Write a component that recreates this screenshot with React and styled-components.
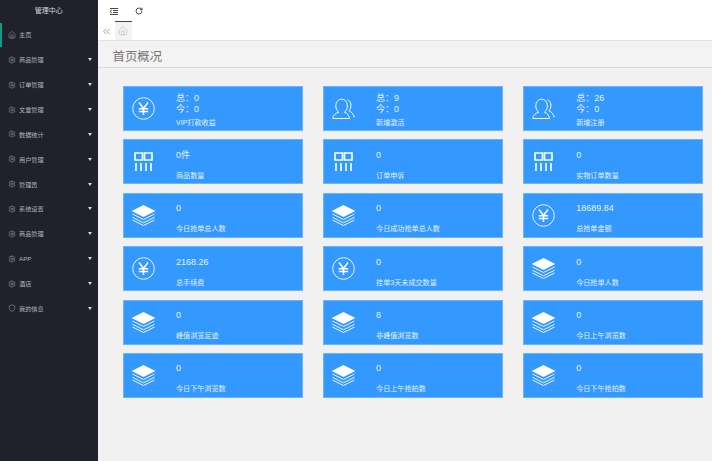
import React from "react";
import styled, { createGlobalStyle } from "styled-components";
import { Home, Settings, Shield, RotateCw, ChevronsLeft } from "lucide-react";

const GlobalStyle = createGlobalStyle`
  html, body {
    margin: 0;
    padding: 0;
    height: 100%;
    overflow: hidden;
    font-family: "Liberation Sans", "Noto Sans CJK SC", sans-serif;
    background: #f1f1f1;
  }
`;

const Page = styled.div`
  display: flex;
  width: 712px;
  height: 461px;
  overflow: hidden;
`;

const Sidebar = styled.aside`
  flex: 0 0 97.5px;
  background: #1f222b;
`;

const Brand = styled.div`
  height: 22.5px;
  line-height: 21px;
  text-align: center;
  font-size: 7px;
  color: #d8d8d8;
`;

const NavItem = styled.div`
  display: flex;
  align-items: center;
  height: 24.86px;
  padding: 0 5.5px 0 5.5px;
  border-left: 2px solid ${(p) => (p.$active ? "#0f9d86" : "transparent")};
  font-size: 6.2px;
  color: #b0b2b6;
  svg {
    flex: 0 0 8px;
    width: 8px;
    height: 8px;
    margin-right: 3.5px;
    color: #a4a6aa;
  }
`;

const NavLabel = styled.span`
  flex: 1;
`;

const Caret = styled.i`
  width: 0;
  height: 0;
  border-left: 2.5px solid transparent;
  border-right: 2.5px solid transparent;
  border-top: 3px solid #d4d5d7;
`;

const Main = styled.main`
  flex: 1;
  min-width: 0;
`;

const Toolbar = styled.div`
  display: flex;
  align-items: center;
  gap: 16.5px;
  height: 22px;
  padding-left: 12.5px;
  background: #fff;
  svg {
    color: #333;
  }
`;

const Tabs = styled.div`
  display: flex;
  align-items: stretch;
  height: 18px;
  background: #fff;
  border-bottom: 1px solid #e4e4e4;
`;

const TabArrow = styled.div`
  display: flex;
  align-items: center;
  justify-content: center;
  width: 17.5px;
  color: #777;
`;

const Tab = styled.div`
  display: flex;
  align-items: center;
  justify-content: center;
  width: 16.5px;
  background: #f3f3f3;
  border-top: 1px solid #444;
  margin-top: -1px;
  color: #b4b4b4;
`;

const TitleBar = styled.div`
  height: 26px;
  padding-left: 15px;
  line-height: 33px;
  font-size: 12.4px;
  color: #767676;
  background: #f3f3f3;
  border-bottom: 1.5px solid #d9d9d9;
`;

const CardGrid = styled.div`
  display: grid;
  grid-template-columns: repeat(3, 179.3px);
  grid-auto-rows: 45px;
  column-gap: 20.8px;
  row-gap: 8.4px;
  padding: 18px 0 0 25.8px;
`;

const Card = styled.div`
  display: flex;
  box-sizing: border-box;
  align-items: center;
  padding-left: 8px;
  background: #3399ff;
  border: 1px solid #6cb4fd;
  color: #fff;
`;

const IconSlot = styled.div`
  display: flex;
  flex: 0 0 23px;
  align-items: center;
  justify-content: center;
  margin-right: 20.7px;
`;

const CardBody = styled.div`
  display: flex;
  flex-direction: column;
  align-self: stretch;
  padding-top: ${(p) => (p.$double ? "5.5px" : "9.5px")};
`;

const Value = styled.div`
  height: ${(p) => (p.$tight ? "11px" : "21px")};
  line-height: 11px;
  font-size: 9px;
  color: #e6f2ff;
  white-space: pre;
`;

const Label = styled.div`
  margin-top: ${(p) => (p.$double ? "3px" : "0")};
  line-height: 10px;
  font-size: 7.1px;
  color: #e3f0ff;
  white-space: nowrap;
`;

const YenIcon = () => (
  <svg width="23" height="23" viewBox="0 0 23 23" fill="none" stroke="#fff">
    <circle cx="11.5" cy="11.5" r="10.8" strokeWidth="0.9" />
    <path d="M7 5.5l4.5 6 4.5-6M11.5 11.5V18M6.8 11.8h9.4M6.8 14.6h9.4" strokeWidth="1.5" />
  </svg>
);

const UsersIcon = () => (
  <svg width="23" height="22" viewBox="0 0 23 22" fill="none" stroke="#fff" strokeWidth="1">
    <path d="M.8 20.500c.2-3.300 2.700-5.200 6-6.300-1.900-1.500-3-3.500-3-6.200C3.800 4.200 6.200 1.200 9.600 1.200S15.400 4.200 15.400 8c0 2.700-1.100 4.700-3 6.200 3 1.100 4.700 2.900 5 6.300z" />
    <path d="M15.400 1.800c2.200.6 3.500 2.900 3.500 5.700 0 2.200-.6 3.900-1.800 5.300 2.800 1.500 4.600 3.500 5.100 6.500" />
  </svg>
);

const GridIcon = () => (
  <svg width="19" height="19" viewBox="0 0 19 19" fill="none" stroke="#fff">
    <path d="M1 1h7.500v7H1zM10.500 1H18v7h-7.500z" strokeWidth="1.6" />
    <path d="M2 11v8M7 11v8M12 11v8M17 11v8" strokeWidth="1.6" />
  </svg>
);

const StackIcon = () => (
  <svg width="23" height="21" viewBox="0 0 23 21" fill="none" stroke="#fff" strokeWidth="0.9">
    <path d="M11.500 0.500L22.500 6l-11 5.500L0.500 6z" fill="#fff" />
    <path d="M0.500 9l11 5.500 11-5.500M0.500 12.300l11 5.500 11-5.500M0.500 15l11 5.500 11-5.500" />
  </svg>
);

const OutdentIcon = () => (
  <svg width="8" height="7" viewBox="0 0 8 7" fill="none" stroke="#333" strokeWidth="0.9">
    <path d="M0 .5h8M3 2.500h5M3 4.500h5M0 6.500h8M1.800 2L0 3.500 1.800 5" />
  </svg>
);

const menu = [
  "商品管理", "订单管理", "文章管理", "数据统计", "用户管理", "管理员",
  "系统设置", "商品管理", "APP", "酒店", "我的信息",
];

const cards = [
  { icon: YenIcon, total: "0", today: "0", label: "VIP打款收益" },
  { icon: UsersIcon, total: "9", today: "0", label: "新增激活" },
  { icon: UsersIcon, total: "26", today: "0", label: "新增注册" },
  { icon: GridIcon, value: "0件", label: "商品数量" },
  { icon: GridIcon, value: "0", label: "订单申诉" },
  { icon: GridIcon, value: "0", label: "实物订单数量" },
  { icon: StackIcon, value: "0", label: "今日抢单总人数" },
  { icon: StackIcon, value: "0", label: "今日成功抢单总人数" },
  { icon: YenIcon, value: "18689.84", label: "总抢单金额" },
  { icon: YenIcon, value: "2168.26", label: "总手续费" },
  { icon: YenIcon, value: "0", label: "挂单3天未成交数量" },
  { icon: StackIcon, value: "0", label: "今日抢单人数" },
  { icon: StackIcon, value: "0", label: "峰值浏览足迹" },
  { icon: StackIcon, value: "8", label: "非峰值浏览数" },
  { icon: StackIcon, value: "0", label: "今日上午浏览数" },
  { icon: StackIcon, value: "0", label: "今日下午浏览数" },
  { icon: StackIcon, value: "0", label: "今日上午抢拍数" },
  { icon: StackIcon, value: "0", label: "今日下午抢拍数" },
];

export default function App() {
  return (
    <Page>
      <GlobalStyle />
      <Sidebar>
        <Brand>管理中心</Brand>
        <NavItem $active>
          <Home strokeWidth={1.5} />
          <NavLabel>主页</NavLabel>
        </NavItem>
        {menu.map((name, i) => (
          <NavItem key={i}>
            {name === "我的信息" ? <Shield strokeWidth={1.5} /> : <Settings strokeWidth={1.5} />}
            <NavLabel>{name}</NavLabel>
            <Caret />
          </NavItem>
        ))}
      </Sidebar>
      <Main>
        <Toolbar>
          <OutdentIcon />
          <RotateCw size={8} strokeWidth={2.5} />
        </Toolbar>
        <Tabs>
          <TabArrow>
            <ChevronsLeft size={11} strokeWidth={1.5} />
          </TabArrow>
          <Tab>
            <Home size={10} strokeWidth={1.3} />
          </Tab>
        </Tabs>
        <TitleBar>首页概况</TitleBar>
        <CardGrid>
          {cards.map((c, i) => {
            const Icon = c.icon;
            const double = c.total !== undefined;
            return (
              <Card key={i}>
                <IconSlot>
                  <Icon />
                </IconSlot>
                <CardBody $double={double}>
                  {double ? (
                    <>
                      <Value $tight>总：{c.total}</Value>
                      <Value $tight>今：{c.today}</Value>
                    </>
                  ) : (
                    <Value>{c.value}</Value>
                  )}
                  <Label $double={double}>{c.label}</Label>
                </CardBody>
              </Card>
            );
          })}
        </CardGrid>
      </Main>
    </Page>
  );
}
